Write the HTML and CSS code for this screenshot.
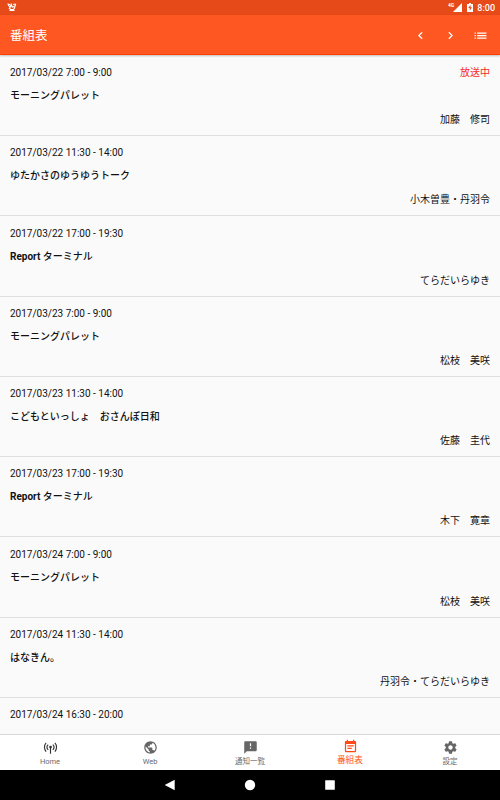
FILE: index.html
```
<!DOCTYPE html>
<html lang="ja">
<head>
<meta charset="utf-8">
<title>番組表</title>
<link rel="stylesheet" href="styles.css">
</head>
<body>
<div class="screen">
  <div class="status">
    <svg class="debug" width="10" height="9" viewBox="0 0 10 9"><path d="M.5 1L3 1.500M1.200 1.500L3 4.500L4.200 1.300L5.300 4.200M6 1.500L8.700 1M8.700 1L7.500 4.500M5.300 4.200L7 3.500M2 5L3.500 6.500H6.500L8 4.500M2.500 7.500H7.500" fill="none" stroke="#fff" stroke-width="1.2"/></svg>
    <span class="net">4G</span>
    <svg class="signal" width="9" height="9" viewBox="0 0 9 9"><path d="M0 9L9 0V9Z" fill="#fff"/></svg>
    <svg class="battery" width="6" height="9" viewBox="0 0 6 9"><path d="M2 0h2v1h2v8H0V1h2z" fill="#fff"/><path d="M3.600 1.700L1.200 5h1.500V7.800L5 4.200H3.500z" fill="#e64a19"/></svg>
    <span class="clock">8:00</span>
  </div>
  <header class="bar">
    <h1>番組表</h1>
    <svg class="action" viewBox="0 0 24 24"><path d="M15.410 7.410L14 6l-6 6 6 6 1.410-1.410L10.830 12z"/></svg>
    <svg class="action" viewBox="0 0 24 24"><path d="M10 6L8.590 7.410 13.170 12l-4.580 4.590L10 18l6-6z"/></svg>
    <svg class="action" viewBox="0 0 24 24"><path d="M2.500 7h2v2h-2zM2.500 11h2v2h-2zM2.500 15h2v2h-2zM6.500 7h15v2h-15zM6.500 11h15v2h-15zM6.500 15h15v2h-15z"/></svg>
  </header>
  <main class="list">
    <article class="row"><div class="top"><time>2017/03/22 7:00 - 9:00</time><span class="live">放送中</span></div><h2>モーニングパレット</h2><p>加藤　修司</p></article>
    <article class="row"><div class="top"><time>2017/03/22 11:30 - 14:00</time></div><h2>ゆたかさのゆうゆうトーク</h2><p>小木曽豊・丹羽令</p></article>
    <article class="row"><div class="top"><time>2017/03/22 17:00 - 19:30</time></div><h2><b>Report</b> ターミナル</h2><p>てらだいらゆき</p></article>
    <article class="row"><div class="top"><time>2017/03/23 7:00 - 9:00</time></div><h2>モーニングパレット</h2><p>松枝　美咲</p></article>
    <article class="row"><div class="top"><time>2017/03/23 11:30 - 14:00</time></div><h2>こどもといっしょ　おさんぽ日和</h2><p>佐藤　圭代</p></article>
    <article class="row"><div class="top"><time>2017/03/23 17:00 - 19:30</time></div><h2><b>Report</b> ターミナル</h2><p>木下　寛章</p></article>
    <article class="row"><div class="top"><time>2017/03/24 7:00 - 9:00</time></div><h2>モーニングパレット</h2><p>松枝　美咲</p></article>
    <article class="row"><div class="top"><time>2017/03/24 11:30 - 14:00</time></div><h2>はなきん。</h2><p>丹羽令・てらだいらゆき</p></article>
    <article class="row"><div class="top"><time>2017/03/24 16:30 - 20:00</time></div></article>
  </main>
  <nav class="tabs">
    <a class="tab"><svg viewBox="0 0 24 24"><g fill="none" stroke="#333" stroke-width="1.8"><path d="M5 4.500a10.500 10.500 0 0 0 0 14M19 4.500a10.500 10.500 0 0 1 0 14M8.300 7.300a6 6 0 0 0 0 8.400M15.700 7.300a6 6 0 0 1 0 8.400M12 12v10"/></g><circle cx="12" cy="11.300" r="2.200" fill="#333"/></svg><span>Home</span></a>
    <a class="tab"><svg viewBox="0 0 24 24"><path d="M12 2C6.480 2 2 6.480 2 12s4.480 10 10 10 10-4.480 10-10S17.520 2 12 2zm-1 17.930c-3.950-.490-7-3.850-7-7.930 0-.620.080-1.210.210-1.790L9 15v1c0 1.100.900 2 2 2v1.930zm6.900-2.540c-.260-.810-1-1.390-1.900-1.390h-1v-3c0-.550-.450-1-1-1H8v-2h2c.550 0 1-.450 1-1V7h2c1.100 0 2-.900 2-2v-.410c2.930 1.190 5 4.060 5 7.410 0 2.080-.800 3.970-2.100 5.390z"/></svg><span>Web</span></a>
    <a class="tab"><svg viewBox="0 0 24 24"><path d="M20 2H4c-1.100 0-1.990.900-1.990 2L2 22l4-4h14c1.100 0 2-.900 2-2V4c0-1.100-.900-2-2-2zm-7 12h-2v-2h2v2zm0-4h-2V5h2v5z"/></svg><span>通知一覧</span></a>
    <a class="tab active"><svg viewBox="0 0 24 24"><path d="M17 10H7v2h10v-2zm2-7h-1V1h-2v2H8V1H6v2H5c-1.110 0-1.990.900-1.990 2L3 19c0 1.100.890 2 2 2h14c1.100 0 2-.900 2-2V5c0-1.100-.900-2-2-2zm0 16H5V8h14v11zm-5-5H7v2h7v-2z"/></svg><span>番組表</span></a>
    <a class="tab"><svg viewBox="0 0 24 24"><path d="M19.430 12.980c.040-.320.070-.640.070-.980s-.030-.660-.070-.980l2.110-1.650c.190-.150.240-.420.120-.640l-2-3.460c-.120-.220-.390-.300-.610-.220l-2.490 1c-.520-.400-1.080-.730-1.690-.980l-.380-2.650C14.460 2.180 14.250 2 14 2h-4c-.250 0-.460.180-.490.420l-.380 2.650c-.610.250-1.170.590-1.690.980l-2.490-1c-.230-.090-.490 0-.610.220l-2 3.460c-.130.220-.070.490.120.640l2.110 1.650c-.040.320-.070.650-.070.980s.030.660.070.980l-2.110 1.650c-.190.150-.240.420-.120.640l2 3.460c.120.220.390.300.610.220l2.490-1c.520.400 1.080.730 1.690.980l.380 2.650c.030.240.240.420.490.420h4c.250 0 .460-.180.490-.420l.380-2.650c.610-.250 1.170-.590 1.690-.980l2.490 1c.230.090.490 0 .610-.220l2-3.460c.120-.220.070-.490-.120-.640l-2.110-1.650zM12 15.500c-1.930 0-3.500-1.570-3.500-3.500s1.570-3.500 3.500-3.500 3.500 1.570 3.500 3.500-1.570 3.500-3.500 3.500z"/></svg><span>設定</span></a>
  </nav>
  <div class="system">
    <svg viewBox="0 0 12 12"><path d="M.7 6L10.700.7V11.300Z"/></svg>
    <svg viewBox="0 0 12 12"><circle cx="6" cy="6" r="5.200"/></svg>
    <svg viewBox="0 0 12 12"><rect x="1.200" y="1.200" width="9.600" height="9.600" rx=".5"/></svg>
  </div>
</div>
</body>
</html>
```
FILE: styles.css
```
* { box-sizing: border-box; }
body, h1, h2, p { margin: 0; }
body {
  background: #fafafa;
  color: #111;
  font: 10px/14px Roboto, "Noto Sans CJK JP", sans-serif;
}
.screen { width: 500px; height: 800px; display: flex; flex-direction: column; overflow: hidden; }
.status {
  flex: 0 0 15px;
  display: flex;
  align-items: center;
  padding: 0 5px 0 7px;
  background: #e64a19;
  color: #fff;
}
.debug { margin-right: auto; }
.net { font-size: 5px; line-height: 5px; font-weight: 700; margin-bottom: 5px; }
.signal { margin-left: -1px; }
.battery { margin: 0 4px 0 5px; }
.clock { font-size: 9px; line-height: 11px; font-weight: 500; margin-top: 2px; }
.bar {
  flex: 0 0 40px;
  display: flex;
  align-items: center;
  gap: 15px;
  padding: 1px 12.500px 0 10px;
  background: #ff5722;
  color: #fff;
  border-bottom: 1px solid #ff3d00;
  box-shadow: 0 1px 2px rgba(0, 0, 0, .25);
  position: relative;
}
h1 { flex: 1; font-size: 12.500px; line-height: 20px; font-weight: 400; padding-top: 1px; }
.action { width: 15px; height: 15px; fill: #fff; }
.list { flex: 1; min-height: 0; overflow: hidden; padding-top: .7px; }
.row { height: 80.300px; padding: 10.300px 10px 0; border-bottom: 1px solid #e0e0e0; }
.top { display: flex; justify-content: space-between; height: 14px; }
.live { color: #f32a22; }
h2 { margin-top: 9px; height: 14px; font-size: 10px; line-height: 14px; font-weight: 500; }
h2 b { font-weight: 700; }
.row p { margin-top: 10px; text-align: right; }
.tabs {
  flex: 0 0 36px;
  display: flex;
  background: #fff;
  border-top: 1px solid #d8d8d8;
}
.tab {
  flex: 1;
  display: flex;
  flex-direction: column;
  align-items: center;
  padding-top: 5px;
  color: #6b6b6b;
  font-size: 7.500px;
  line-height: 10px;
}
.tab svg { width: 15px; height: 15px; fill: #666; }
.tab span { margin-top: 2px; }
.active { color: #ff5722; font-size: 8.750px; padding-top: 4px; }
.active svg { fill: #ff4a18; }
.active span { margin-top: 1px; }
.system {
  flex: 0 0 30px;
  display: flex;
  justify-content: center;
  align-items: center;
  gap: 68px;
  background: #000;
}
.system svg { width: 12px; height: 12px; fill: #fff; }
```
